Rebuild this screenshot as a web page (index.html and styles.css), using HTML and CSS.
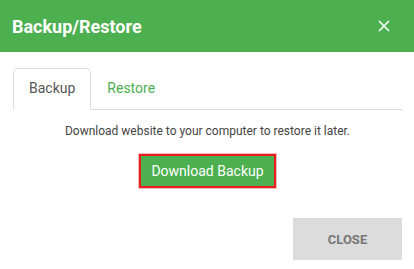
FILE: index.html
```html
<!DOCTYPE html>
<html lang="en">
<head>
    <meta charset="UTF-8">
    <meta name="viewport" content="width=device-width, initial-scale=1.0">
    <title>Backup/Restore</title>
    <link rel="stylesheet" href="styles.css">
</head>
<body>
    <div class="modal">
        <div class="modal-header">
            <h1>Backup/Restore</h1>
            <button class="close-x" aria-label="Close">
                <svg width="12" height="12" viewBox="0 0 12 12">
                    <path d="M1 1 L11 11 M11 1 L1 11" stroke="#fff" stroke-width="1.6" fill="none"/>
                </svg>
            </button>
        </div>
        <div class="modal-body">
            <div class="tabs">
                <span class="tab active">Backup</span>
                <span class="tab">Restore</span>
            </div>
            <div class="tab-pane">
                <p class="desc">Download website to your computer to restore it later.</p>
                <button class="download">Download Backup</button>
            </div>
        </div>
        <div class="modal-footer">
            <button class="close-btn">CLOSE</button>
        </div>
    </div>
</body>
</html>
```

FILE: styles.css
```css
body {
    font-family: Roboto, "Liberation Sans", sans-serif;
    margin: 0;
    padding: 0;
    background-color: #fff;
}
.modal {
    width: 414px;
    height: 269px;
    display: flex;
    flex-direction: column;
}
.modal-header {
    height: 52px;
    background-color: #4caf50;
    display: flex;
    align-items: center;
    justify-content: space-between;
    padding: 0 24px 0 12px;
}
.modal-header h1 {
    margin: 0;
    color: #fff;
    font-size: 18px;
    font-weight: 700;
}
.close-x {
    background: none;
    border: none;
    padding: 0;
    display: flex;
    cursor: pointer;
}
.modal-body {
    padding: 16px 12px 0 13px;
}
.tabs {
    display: flex;
    border-bottom: 1px solid #ddd;
}
.tab {
    font-size: 14px;
    color: #4caf50;
    padding: 11px 15px 12px 15px;
    margin-bottom: -1px;
    border: 1px solid transparent;
    border-radius: 5px 5px 0 0;
    line-height: 17px;
}
.tab.active {
    color: #555;
    border-color: #ddd #ddd #fff #ddd;
    background-color: #fff;
}
.tab-pane {
    display: flex;
    flex-direction: column;
    align-items: center;
}
.desc {
    margin: 14px 0 0 0;
    font-size: 12px;
    color: #444;
    line-height: 15px;
}
.download {
    margin-top: 15px;
    height: 34px;
    width: 137px;
    background-color: #4caf50;
    color: #fff;
    font-family: Roboto, "Liberation Sans", sans-serif;
    font-size: 14px;
    border: 2px solid #e81c1c;
    box-shadow: 0 0 0 1px rgba(232, 28, 28, 0.3);
    padding: 0;
    cursor: pointer;
}
.modal-footer {
    margin-top: auto;
    display: flex;
    justify-content: flex-end;
    padding: 0 12px 9px 0;
}
.close-btn {
    width: 109px;
    height: 42px;
    background-color: #dcdcdd;
    color: #777;
    border: none;
    font-family: Roboto, "Liberation Sans", sans-serif;
    font-size: 13px;
    font-weight: 700;
    cursor: pointer;
}
```
